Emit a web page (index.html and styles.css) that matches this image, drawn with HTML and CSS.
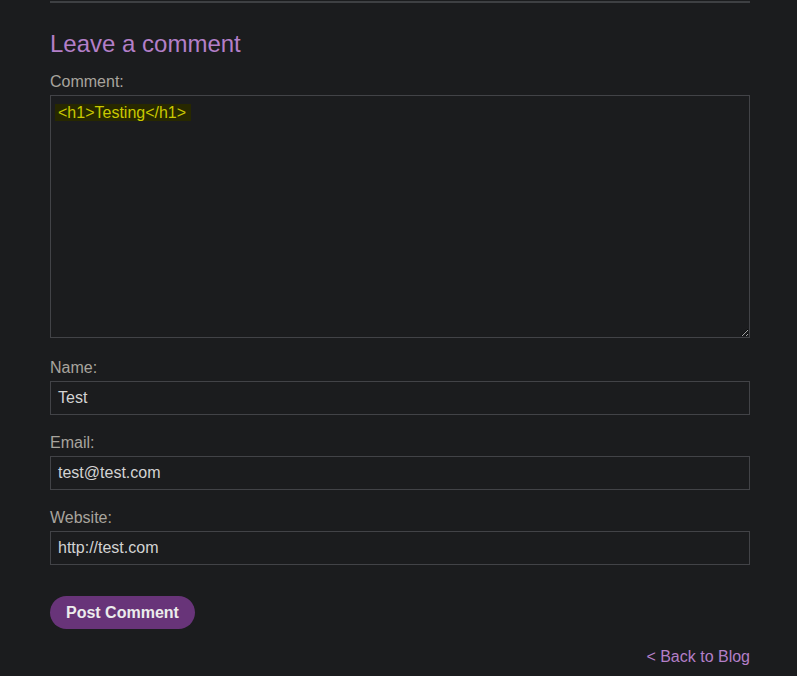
FILE: index.html
```html
<!DOCTYPE html>
<html>
<head>
<meta charset="utf-8">
<link rel="stylesheet" href="styles.css">
</head>
<body>
<div class="wrap">
  <hr class="rule">
  <h2 class="title">Leave a comment</h2>
  <form class="form">
    <label class="label">Comment:</label>
    <div class="textarea"><span class="hl">&lt;h1&gt;Testing&lt;/h1&gt;</span></div>
    <label class="label">Name:</label>
    <div class="input">Test</div>
    <label class="label">Email:</label>
    <div class="input">test@test.com</div>
    <label class="label">Website:</label>
    <div class="input">http://test.com</div>
    <div class="actions"><button type="button" class="btn">Post Comment</button></div>
  </form>
  <div class="back"><a href="#">&lt; Back to Blog</a></div>
</div>
</body>
</html>
```
FILE: styles.css
```css
html, body {
  margin: 0;
  padding: 0;
  background: #1b1c1e;
  font-family: "Liberation Sans", Arial, sans-serif;
  overflow: hidden;
}
.wrap {
  width: 700px;
  margin-left: 50px;
  padding-top: 1px;
}
.rule {
  margin: 0;
  border: 0;
  height: 2px;
  background: #3e4043;
}
.title {
  margin: 27px 0 0;
  font-size: 24px;
  font-weight: normal;
  line-height: 28px;
  color: #b37fc8;
}
.form {
  display: flex;
  flex-direction: column;
  margin-top: 15px;
}
.label {
  font-size: 16px;
  line-height: 18px;
  color: #a8a49d;
  margin-bottom: 4px;
}
.textarea {
  box-sizing: border-box;
  height: 243px;
  border: 1px solid #424347;
  padding: 8px 7px 7px 4px;
  font-size: 16px;
  line-height: 18px;
  color: #c9c900;
  overflow: auto;
  resize: both;
  margin-bottom: 21px;
}
.hl {
  background: #272800;
  padding: 0 5px 0 3px;
}
.input {
  box-sizing: border-box;
  height: 34px;
  border: 1px solid #424347;
  padding: 0 7px;
  font-size: 16px;
  line-height: 32px;
  color: #d3d3d3;
  margin-bottom: 19px;
}
.actions {
  margin-top: 12px;
}
.btn {
  background: #683479;
  color: #ececec;
  border: 0;
  border-radius: 17px;
  height: 33px;
  padding: 0 16px;
  font-family: "Liberation Sans", Arial, sans-serif;
  font-weight: bold;
  font-size: 16px;
}
.back {
  text-align: right;
  margin-top: 19px;
  font-size: 16px;
  line-height: 18px;
}
.back a {
  color: #b37fc8;
  text-decoration: none;
}
```
